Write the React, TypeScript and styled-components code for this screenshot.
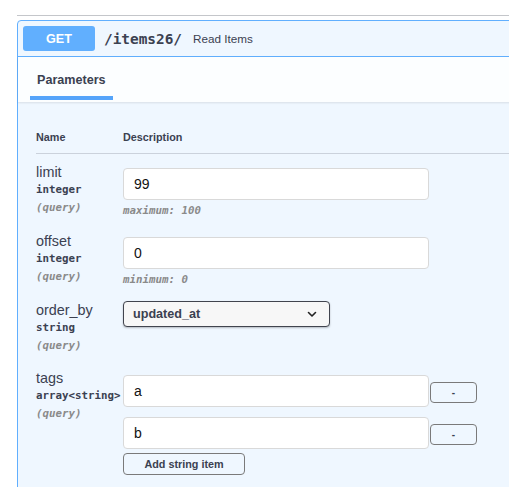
import React from "react";
import styled, { createGlobalStyle } from "styled-components";

const GlobalStyle = createGlobalStyle`
  html, body {
    margin: 0;
    padding: 0;
    background: #ffffff;
    overflow: hidden;
  }
  body {
    font-family: "Liberation Sans", Arial, sans-serif;
    color: #3b4151;
  }
`;

const SANS = `"Liberation Sans", Arial, sans-serif`;
const MONO = `"DejaVu Sans Mono", "Liberation Mono", monospace`;

type Param = {
  name: string;
  type: string;
  value?: string;
  kind: "input" | "select" | "array";
  validation?: string;
  items?: string[];
};

const params: Param[] = [
  { name: "limit", type: "integer", value: "99", kind: "input", validation: "maximum: 100" },
  { name: "offset", type: "integer", value: "0", kind: "input", validation: "minimum: 0" },
  { name: "order_by", type: "string", value: "updated_at", kind: "select" },
  { name: "tags", type: "array<string>", kind: "array", items: ["a", "b"] },
];

export default function App() {
  return (
    <>
      <GlobalStyle />
      <Page>
        <TagHeader />
        <OpBlock>
          <Summary>
            <MethodBadge>GET</MethodBadge>
            <Path>/items26/</Path>
            <SummaryText>Read Items</SummaryText>
          </Summary>

          <TabHeader>
            <Tab>Parameters</Tab>
          </TabHeader>

          <ParamTable>
            <HeadRow>
              <HeadCell>Name</HeadCell>
              <HeadCell>Description</HeadCell>
            </HeadRow>

            {params.map((p) => (
              <ParamRow key={p.name}>
                <NameCol>
                  <ParamName>{p.name}</ParamName>
                  <ParamType>{p.type}</ParamType>
                  <ParamIn>(query)</ParamIn>
                </NameCol>
                <DescCol>
                  {p.kind === "input" && (
                    <>
                      <TextInput defaultValue={p.value} />
                      <Validation>{p.validation}</Validation>
                    </>
                  )}
                  {p.kind === "select" && (
                    <Select>
                      <span>{p.value}</span>
                      <svg width="10" height="7" viewBox="0 0 10 7" aria-hidden="true">
                        <path d="M1.5 1.5 L5 5 L8.5 1.5" fill="none" stroke="#222" strokeWidth="1.6" strokeLinecap="round" strokeLinejoin="round" />
                      </svg>
                    </Select>
                  )}
                  {p.kind === "array" && (
                    <ArrayList>
                      {p.items?.map((it) => (
                        <ArrayItem key={it}>
                          <TextInput defaultValue={it} $flush />
                          <SmallButton>-</SmallButton>
                        </ArrayItem>
                      ))}
                      <AddButton>Add string item</AddButton>
                    </ArrayList>
                  )}
                </DescCol>
              </ParamRow>
            ))}
          </ParamTable>
        </OpBlock>
      </Page>
    </>
  );
}

const Page = styled.div`
  padding-left: 17px;
  width: 640px;
`;

const TagHeader = styled.div`
  height: 15px;
  border-bottom: 1px solid rgba(59, 65, 81, 0.3);
  margin-bottom: 4px;
`;

const OpBlock = styled.div`
  border: 1px solid #61affe;
  border-radius: 4px;
  background: rgba(97, 175, 254, 0.1);
  padding-bottom: 40px;
`;

const Summary = styled.div`
  display: flex;
  align-items: center;
  height: 35px;
  padding: 0 5px;
  border-bottom: 1px solid #61affe;
  box-sizing: border-box;
  height: 36px;
`;

const MethodBadge = styled.div`
  width: 72px;
  height: 25px;
  border-radius: 3px;
  background: #61affe;
  color: #ffffff;
  font-family: ${SANS};
  font-weight: 700;
  font-size: 12.6px;
  display: flex;
  align-items: center;
  justify-content: center;
`;

const Path = styled.span`
  margin-left: 9px;
  font-family: ${MONO};
  font-weight: 700;
  font-size: 14.4px;
  color: #3b4151;
`;

const SummaryText = styled.span`
  margin-left: 11px;
  font-family: ${SANS};
  font-size: 11.7px;
  color: #3b4151;
`;

const TabHeader = styled.div`
  height: 45px;
  box-sizing: border-box;
  padding: 0 0 2px 12px;
  display: flex;
  align-items: flex-end;
  background: rgba(255, 255, 255, 0.8);
  box-shadow: 0 1px 2px rgba(0, 0, 0, 0.1);
`;

const Tab = styled.div`
  padding: 0 7px 8px;
  line-height: 16px;
  font-family: ${SANS};
  font-weight: 700;
  font-size: 12.6px;
  color: #3b4151;
  border-bottom: 4px solid #55a4fa;
`;

const ParamTable = styled.div`
  padding: 0 0 0 18px;
`;

const HeadRow = styled.div`
  display: grid;
  grid-template-columns: 87px 1fr;
  padding: 28px 0 9px;
  border-bottom: 1px solid rgba(59, 65, 81, 0.2);
`;

const HeadCell = styled.div`
  font-family: ${SANS};
  font-weight: 700;
  font-size: 10.8px;
  line-height: 14px;
  color: #3b4151;
`;

const ParamRow = styled.div`
  display: grid;
  grid-template-columns: 87px 1fr;
  padding: 0 0 14px;
  &:first-of-type {
    padding-top: 0;
  }
  &:nth-child(2) {
    padding-top: 9px;
  }
`;

const NameCol = styled.div`
  display: flex;
  flex-direction: column;
`;

const ParamName = styled.div`
  font-family: ${SANS};
  font-size: 14.4px;
  line-height: 18px;
  color: #3b4151;
`;

const ParamType = styled.div`
  font-family: ${MONO};
  font-weight: 700;
  font-size: 10.8px;
  line-height: 18px;
  color: #3b4151;
  white-space: nowrap;
`;

const ParamIn = styled.div`
  font-family: ${MONO};
  font-style: italic;
  font-weight: 700;
  font-size: 10.8px;
  line-height: 18px;
  color: #8a8a8a;
`;

const DescCol = styled.div`
  display: flex;
  flex-direction: column;
  align-items: flex-start;
`;

const TextInput = styled.input<{ $flush?: boolean }>`
  box-sizing: border-box;
  width: 306px;
  height: 32px;
  margin: ${(p) => (p.$flush ? "0" : "5px 0 0")};
  padding: 0 10px;
  border: 1px solid #d9d9d9;
  border-radius: 4px;
  background: #ffffff;
  font-family: ${SANS};
  font-size: 14px;
  color: #111;
  outline: none;
`;

const Validation = styled.div`
  margin-top: 4px;
  font-family: ${MONO};
  font-style: italic;
  font-weight: 700;
  font-size: 10.8px;
  line-height: 14px;
  color: #8a8a8a;
`;

const Select = styled.div`
  box-sizing: border-box;
  width: 207px;
  height: 26px;
  padding: 0 12px 0 9px;
  display: flex;
  align-items: center;
  justify-content: space-between;
  background: #f7f7f7;
  border: 1.5px solid #41444e;
  border-radius: 4px;
  box-shadow: 0 1px 2px rgba(0, 0, 0, 0.25);
  font-family: ${SANS};
  font-weight: 700;
  font-size: 12.6px;
  color: #3b4151;
`;

const ArrayList = styled.div`
  display: flex;
  flex-direction: column;
  align-items: flex-start;
  padding-top: 6px;
  gap: 10px;
`;

const ArrayItem = styled.div`
  display: flex;
  align-items: center;
  gap: 1px;
`;

const SmallButton = styled.button`
  box-sizing: border-box;
  width: 47px;
  height: 21px;
  margin-top: 2px;
  padding: 0;
  border: 1.5px solid #7a7a7a;
  border-radius: 4px;
  background: transparent;
  font-family: ${SANS};
  font-weight: 700;
  font-size: 10px;
  color: #3b4151;
`;

const AddButton = styled.button`
  box-sizing: border-box;
  width: 122px;
  height: 22px;
  margin-top: -6px;
  padding: 0;
  border: 1.5px solid #7a7a7a;
  border-radius: 4px;
  background: transparent;
  font-family: ${SANS};
  font-weight: 700;
  font-size: 10.8px;
  color: #3b4151;
`;
